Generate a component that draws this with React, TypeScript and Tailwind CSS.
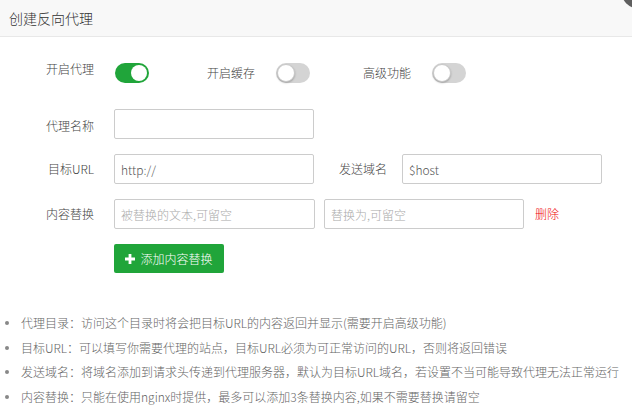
import React from "react";

const font = { fontFamily: '"Noto Sans CJK SC", "Noto Sans", sans-serif' };

function Toggle({ on }: { on: boolean }) {
  return (
    <div
      className={
        on
          ? "relative w-[34px] h-[20px] rounded-full bg-[#20a53a]"
          : "relative w-[34px] h-[20px] rounded-full bg-[#d4d4d4]"
      }
    >
      <div
        className={
          on
            ? "absolute top-[2px] right-[2px] w-[16px] h-[16px] rounded-full bg-white"
            : "absolute top-[1px] left-[1px] w-[18px] h-[18px] rounded-full bg-white border border-[#c8c8c8] shadow-[0_1px_2px_rgba(0,0,0,0.25)]"
        }
      />
    </div>
  );
}

function Input({ value, placeholder, w = "w-[200px]" }: { value?: string; placeholder?: string; w?: string }) {
  return (
    <input
      readOnly
      value={value}
      placeholder={placeholder}
      className={`${w} h-[30px] border border-[#cccccc] rounded-[2px] px-[6px] text-[12px] text-[#555] font-light placeholder:text-[#aaaaaa] outline-none`}
      style={font}
    />
  );
}

const tips = [
  "代理目录：访问这个目录时将会把目标URL的内容返回并显示(需要开启高级功能)",
  "目标URL：可以填写你需要代理的站点，目标URL必须为可正常访问的URL，否则将返回错误",
  "发送域名：将域名添加到请求头传递到代理服务器，默认为目标URL域名，若设置不当可能导致代理无法正常运行",
  "内容替换：只能在使用nginx时提供，最多可以添加3条替换内容,如果不需要替换请留空",
];

export default function App() {
  return (
    <div className="relative w-[632px] h-[408px] bg-white overflow-hidden text-[#444] font-light" style={font}>
      <div className="h-[37px] bg-[#f8f8f8] border-b border-[#e8e8e8] pl-[9px] flex items-center text-[14px] text-[#333]">
        创建反向代理
      </div>
      <div className="absolute -top-[22px] -right-[20px] w-[30px] h-[30px] rounded-full bg-[#5f5f5f]" />

      <div className="pt-[26px] text-[12px]">
        <div className="flex items-start h-[20px]">
          <div className="w-[94px] text-right leading-[12px]">开启代理</div>
          <div className="ml-[21px]"><Toggle on /></div>
          <div className="ml-[58px] mt-[4px] leading-[12px]">开启缓存</div>
          <div className="ml-[21px]"><Toggle on={false} /></div>
          <div className="ml-[53px] mt-[4px] leading-[12px]">高级功能</div>
          <div className="ml-[21px]"><Toggle on={false} /></div>
        </div>

        <div className="flex items-center mt-[26px] h-[30px]">
          <div className="w-[94px] text-right pt-[4px]">代理名称</div>
          <div className="ml-[20px]"><Input /></div>
        </div>

        <div className="flex items-center mt-[15px] h-[30px]">
          <div className="w-[94px] text-right">目标URL</div>
          <div className="ml-[20px]"><Input value="http://" /></div>
          <div className="ml-[25px]">发送域名</div>
          <div className="ml-[15px]"><Input value="$host" /></div>
        </div>

        <div className="flex items-center mt-[15px] h-[30px]">
          <div className="w-[94px] text-right">内容替换</div>
          <div className="ml-[20px]"><Input placeholder="被替换的文本,可留空" w="w-[201px]" /></div>
          <div className="ml-[9px]"><Input placeholder="替换为,可留空" /></div>
          <div className="ml-[11px] text-[#ef0808]">删除</div>
        </div>

        <div className="mt-[15px] ml-[114px]">
          <button className="flex items-center gap-[5px] h-[29px] w-[110px] justify-center rounded-[2px] bg-[#20a53a] text-white text-[12px]" style={font}>
            <svg width="10" height="10" viewBox="0 0 10 10">
              <path d="M3.6 0h2.8v3.6H10v2.8H6.4V10H3.6V6.4H0V3.6h3.6z" fill="white" />
            </svg>
            添加内容替换
          </button>
        </div>

        <ul className="mt-[38px] text-[12px] text-[#666]">
          {tips.map((t) => (
            <li key={t} className="flex items-center h-[24.5px] whitespace-nowrap">
              <span className="ml-[5px] w-[4px] h-[4px] rounded-full bg-[#888]" />
              <span className="ml-[12px]">{t}</span>
            </li>
          ))}
        </ul>
      </div>
    </div>
  );
}
